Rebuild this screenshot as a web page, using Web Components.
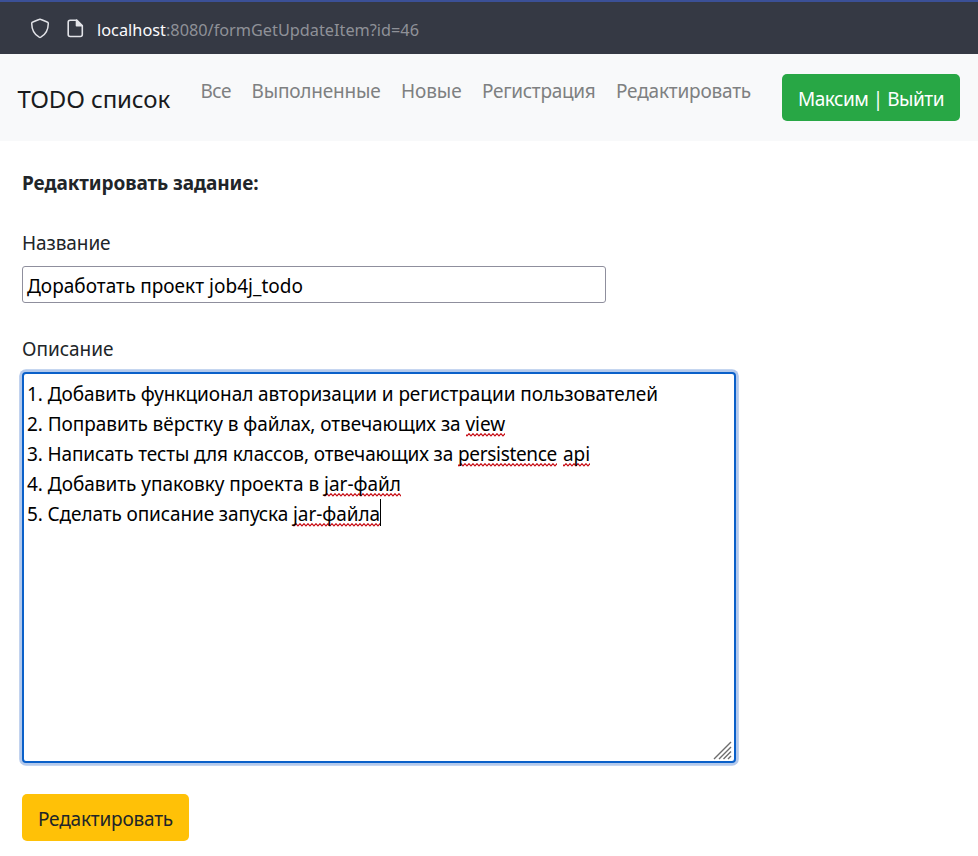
<!DOCTYPE html>
<html lang="ru">
<head>
<meta charset="utf-8">
<title>TODO список</title>
<style>
  html, body { margin: 0; padding: 0; background: #fff; }
  body { font: 19px/30px "Noto Sans", "Open Sans", sans-serif; color: #212529; overflow: hidden; }
</style>
</head>
<body>
<todo-page></todo-page>
<script>
const define = (name, html, setup) => {
  const template = document.createElement('template');
  template.innerHTML = html.trim();
  customElements.define(name, class extends HTMLElement {
    constructor() {
      super();
      this.attachShadow({ mode: 'open' }).append(template.content.cloneNode(true));
    }
    connectedCallback() { if (setup) setup(this); }
  });
};

// Text run that is spaced to fill the width given in its "w" attribute.
define('fit-text', `
  <style>
    :host { display: block; flex: none; }
    span { display: block; width: max-content; white-space: pre; }
  </style><span><slot></slot></span>`, el => {
  const w = parseFloat(el.getAttribute('w'));
  const span = el.shadowRoot.querySelector('span');
  const n = [...el.textContent].length;
  el.style.width = w + 'px';
  span.style.letterSpacing = ((w - span.getBoundingClientRect().width) / n) + 'px';
});

// Word with a spell-checker wave under it.
define('spell-mark', `
  <style>
    :host { display: block; height: 30px;
      background: url("data:image/svg+xml,%3Csvg xmlns='http://www.w3.org/2000/svg' width='4' height='4'%3E%3Cpath d='M-1 .7L1 2.9L3 .7L5 2.9' fill='none' stroke='%23c81018' stroke-width='1.2'/%3E%3C/svg%3E") 0 24px repeat-x; }
  </style><slot></slot>`);

define('address-bar', `
  <style>
    :host { display: flex; align-items: center; box-sizing: border-box; height: 54px; padding: 3px 0 0 30px;
      background: #353944; border-top: 2px solid #3b5097; font-size: 16.3px; color: #8f9198; }
    svg { display: block; flex: none; margin-top: -3px; }
    .page { margin: -3px 13px 0 17px; }
    .host { color: #fbfbfe; }
  </style>
  <svg width="20" height="21" viewBox="0 0 20 21" fill="none" stroke="#e2e3e8" stroke-width="1.5" stroke-linejoin="round"><path d="M10 1.2Q10.500 1.200 11 1.500L17.200 4Q18.300 4.400 18.300 5.500C18.200 12 15.800 16.500 10.800 19.200Q10 19.600 9.200 19.200C4.200 16.500 1.800 12 1.700 5.500Q1.700 4.400 2.800 4L9 1.500Q9.500 1.200 10 1.200Z"/></svg>
  <svg class="page" width="17" height="19" viewBox="0 0 17 19" fill="none" stroke="#e2e3e8" stroke-width="1.6" stroke-linejoin="round"><path d="M9.500 1.200H3.200Q1.200 1.200 1.200 3.200V15.500Q1.200 17.500 3.200 17.500H13.300Q15.300 17.500 15.300 15.500V6.800Z"/><path d="M9.500 1.200V6.800H15.300Z" fill="#e2e3e8"/></svg>
  <fit-text class="host" w="69">localhost</fit-text><fit-text w="253">:8080/formGetUpdateItem?id=46</fit-text>`);

define('nav-link', `
  <style>:host { display: block; color: #7e8081; }</style><slot></slot>`);

define('app-button', `
  <style>
    :host { display: block; width: max-content; box-sizing: border-box; height: 47px; padding: 10px 16px 7px;
      border-radius: 5px; background: #ffc107; color: #212529; }
    :host([kind=success]) { background: #28a745; color: #fff; }
  </style><slot></slot>`);

define('nav-bar', `
  <style>
    :host { display: flex; box-sizing: border-box; height: 87px; padding: 20px 18px; background: #f8f9fa; align-items: flex-start; }
    .brand { font-size: 24px; color: #191b1d; margin: 10px 30.500px 0 -0.500px; }
    nav { display: flex; gap: 20.500px; margin-top: 2px; }
    app-button { margin-left: auto; }
  </style>
  <fit-text class="brand" w="152.500">TODO список</fit-text>
  <nav>
    <nav-link><fit-text w="30.500">Все</fit-text></nav-link>
    <nav-link><fit-text w="129">Выполненные</fit-text></nav-link>
    <nav-link><fit-text w="60.500">Новые</fit-text></nav-link>
    <nav-link><fit-text w="113.500">Регистрация</fit-text></nav-link>
    <nav-link><fit-text w="135">Редактировать</fit-text></nav-link>
  </nav>
  <app-button kind="success"><fit-text w="146">Максим | Выйти</fit-text></app-button>`);

define('text-field', `
  <style>
    :host { display: block; box-sizing: border-box; width: 584px; height: 37px; padding: 4px 4px 2px;
      border: 1px solid #8f8f9d; border-radius: 3px; background: #fff; color: #000; }
  </style><slot></slot>`);

define('text-editor', `
  <style>
    :host { display: block; position: relative; box-sizing: border-box; width: 714px; height: 391px; padding: 5px 3px;
      border: 2px solid #0a60c9; border-radius: 4px; box-shadow: 0 0 0 2.800px #b3c9ec; color: #000; background: #fff; }
    svg { position: absolute; right: 2px; bottom: 1px; }
  </style><slot></slot>
  <svg width="19" height="19" viewBox="0 0 19 19" stroke="#6d6d6d" stroke-width="1.400"><path d="M1 18L18 1M6 18L18 6M10.500 18L18 10.500M15 18L18 15"/></svg>`);

define('edit-line', `
  <style>:host { display: flex; height: 30px; }</style><slot></slot>`);

define('text-caret', `
  <style>:host { display: block; width: 1px; height: 27px; background: #000; }</style>`);

define('task-form', `
  <style>
    :host { display: flex; flex-direction: column; align-items: flex-start; padding: 27px 22px 0; }
    h1 { font: inherit; font-weight: 700; margin: 0; }
    .name { margin-top: 30px; }
    text-field { margin-top: 8px; }
    .about { margin-top: 31px; }
    text-editor { margin-top: 8px; }
    app-button { margin-top: 31px; }
  </style>
  <h1><fit-text w="236.500">Редактировать задание:</fit-text></h1>
  <fit-text class="name" w="88.500">Название</fit-text>
  <text-field><fit-text w="276">Доработать проект job4j_todo</fit-text></text-field>
  <fit-text class="about" w="91.500">Описание</fit-text>
  <text-editor>
    <edit-line><fit-text w="631">1. Добавить функционал авторизации и регистрации пользователей</fit-text></edit-line>
    <edit-line><fit-text w="438.500">2. Поправить вёрстку в файлах, отвечающих за </fit-text><spell-mark><fit-text w="39.500">view</fit-text></spell-mark></edit-line>
    <edit-line><fit-text w="431">3. Написать тесты для классов, отвечающих за </fit-text><spell-mark><fit-text w="99">persistence</fit-text></spell-mark><fit-text w="6"> </fit-text><spell-mark><fit-text w="27">api</fit-text></spell-mark></edit-line>
    <edit-line><fit-text w="297">4. Добавить упаковку проекта в </fit-text><spell-mark><fit-text w="77">jar-файл</fit-text></spell-mark></edit-line>
    <edit-line><fit-text w="266">5. Сделать описание запуска </fit-text><spell-mark><fit-text w="87">jar-файла</fit-text></spell-mark><text-caret></text-caret></edit-line>
  </text-editor>
  <app-button><fit-text w="135">Редактировать</fit-text></app-button>`);

define('todo-page', `
  <style>:host { display: block; height: 856px; overflow: hidden; background: #fff; }</style>
  <address-bar></address-bar><nav-bar></nav-bar><task-form></task-form>`);
</script>
</body>
</html>
